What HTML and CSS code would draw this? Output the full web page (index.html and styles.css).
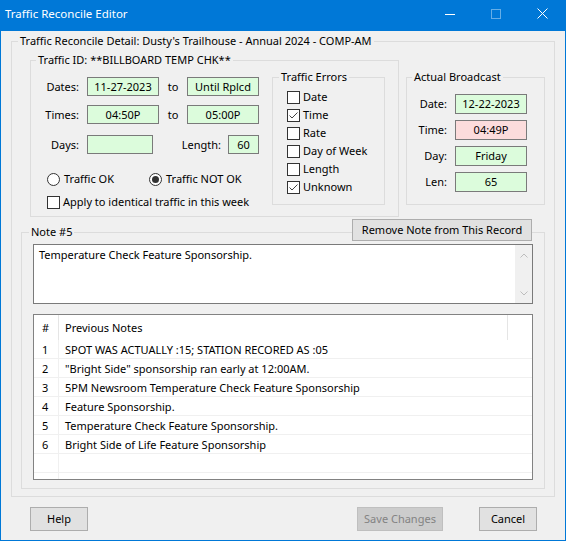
FILE: index.html
```html
<!DOCTYPE html>
<html>
<head>
<meta charset="utf-8">
<title>Traffic Reconcile Editor</title>
<link rel="stylesheet" href="styles.css">
</head>
<body>
<div class="window">
  <div class="titlebar">
    <div class="title">Traffic Reconcile Editor</div>
    <div class="cap"><svg width="10" height="10" viewBox="0 0 10 10"><line x1="0" y1="5.5" x2="10" y2="5.5" stroke="#fff" stroke-width="1"/></svg></div>
    <div class="cap"><svg width="10" height="10" viewBox="0 0 10 10"><rect x="0.5" y="0.5" width="9" height="9" fill="none" stroke="#66aee7" stroke-width="1"/></svg></div>
    <div class="cap"><svg width="11" height="11" viewBox="0 0 11 11"><line x1="0.5" y1="0.5" x2="10.5" y2="10.5" stroke="#fff" stroke-width="1"/><line x1="10.5" y1="0.5" x2="0.5" y2="10.5" stroke="#fff" stroke-width="1"/></svg></div>
  </div>

  <div class="gb outer">
    <div class="gb-title outer-title">Traffic Reconcile Detail: Dusty's Trailhouse - Annual 2024 - COMP-AM</div>
    <div class="top-row">
      <div class="gb tid">
        <div class="gb-title tid-title">Traffic ID: **BILLBOARD TEMP CHK**</div>
        <div class="tid-body">
          <div class="tid-left">
            <div class="frow">
              <div class="lbl">Dates:</div>
              <div class="fld w72 ml8">11-27-2023</div>
              <div class="to">to</div>
              <div class="fld w72">Until Rplcd</div>
            </div>
            <div class="frow r2">
              <div class="lbl">Times:</div>
              <div class="fld w72 ml8">04:50P</div>
              <div class="to">to</div>
              <div class="fld w72">05:00P</div>
            </div>
            <div class="frow r3">
              <div class="lbl">Days:</div>
              <div class="fld w66 ml8"></div>
              <div class="lbl len-lbl">Length:</div>
              <div class="fld w31 ml7">60</div>
            </div>
            <div class="radio-row">
              <div class="ropt first"><span class="radio"></span><span>Traffic OK</span></div>
              <div class="ropt"><span class="radio on"></span><span>Traffic NOT OK</span></div>
            </div>
            <div class="check-row">
              <span class="cb"></span><span>Apply to identical traffic in this week</span>
            </div>
          </div>
          <div class="gb errors">
            <div class="gb-title err-title">Traffic Errors</div>
            <div class="elist">
              <div class="erow"><span class="cb"></span><span>Date</span></div>
              <div class="erow"><span class="cb"><svg width="11" height="11" viewBox="0 0 11 11"><polyline points="1.5,5.5 4,8 9.5,2.5" fill="none" stroke="#444" stroke-width="1"/></svg></span><span>Time</span></div>
              <div class="erow"><span class="cb"></span><span>Rate</span></div>
              <div class="erow"><span class="cb"></span><span>Day of Week</span></div>
              <div class="erow"><span class="cb"></span><span>Length</span></div>
              <div class="erow"><span class="cb"><svg width="11" height="11" viewBox="0 0 11 11"><polyline points="1.5,5.5 4,8 9.5,2.5" fill="none" stroke="#444" stroke-width="1"/></svg></span><span>Unknown</span></div>
            </div>
          </div>
        </div>
      </div>
      <div class="gb ab">
        <div class="gb-title ab-title">Actual Broadcast</div>
        <div class="ab-rows">
          <div class="abrow"><div class="ablbl">Date:</div><div class="fld w72 ab-fld">12-22-2023</div></div>
          <div class="abrow"><div class="ablbl">Time:</div><div class="fld w72 ab-fld bad">04:49P</div></div>
          <div class="abrow"><div class="ablbl">Day:</div><div class="fld w72 ab-fld">Friday</div></div>
          <div class="abrow"><div class="ablbl">Len:</div><div class="fld w72 ab-fld">65</div></div>
        </div>
      </div>
    </div>

    <div class="gb note">
      <div class="note-head">
        <div class="gb-title note-title">Note #5</div>
        <button class="btn remove">Remove Note from This Record</button>
      </div>
      <div class="memo">
        <div class="memo-text">Temperature Check Feature Sponsorship.</div>
        <div class="memo-sb">
          <svg width="8" height="5" viewBox="0 0 8 5"><polyline points="0.5,4.5 4,1 7.5,4.5" fill="none" stroke="#bdbdbd" stroke-width="1"/></svg>
          <svg width="8" height="5" viewBox="0 0 8 5"><polyline points="0.5,0.5 4,4 7.5,0.5" fill="none" stroke="#bdbdbd" stroke-width="1"/></svg>
        </div>
      </div>
      <div class="list">
        <div class="lh"><div class="c1">#</div><div class="c2">Previous Notes</div><div class="c3"></div></div>
        <div class="lr"><div class="c1">1</div><div class="c2">SPOT WAS ACTUALLY :15; STATION RECORED AS :05</div></div>
        <div class="lr"><div class="c1">2</div><div class="c2">"Bright Side" sponsorship ran early at 12:00AM.</div></div>
        <div class="lr"><div class="c1">3</div><div class="c2">5PM Newsroom Temperature Check Feature Sponsorship</div></div>
        <div class="lr"><div class="c1">4</div><div class="c2">Feature Sponsorship.</div></div>
        <div class="lr"><div class="c1">5</div><div class="c2">Temperature Check Feature Sponsorship.</div></div>
        <div class="lr"><div class="c1">6</div><div class="c2">Bright Side of Life Feature Sponsorship</div></div>
        <div class="lr"><div class="c1"></div><div class="c2"></div></div>
        <div class="lr"><div class="c1"></div><div class="c2"></div></div>
      </div>
    </div>
  </div>

  <div class="btnrow">
    <button class="btn help">Help</button>
    <button class="btn save" disabled>Save Changes</button>
    <button class="btn cancel">Cancel</button>
  </div>
</div>
</body>
</html>
```

FILE: styles.css
```css
* { box-sizing: border-box; }
html, body { margin: 0; padding: 0; }
body {
  width: 566px;
  height: 541px;
  overflow: hidden;
  background: #f0f0f0;
  font-family: "Noto Sans", "Segoe UI", sans-serif;
  font-size: 11px;
  line-height: 16px;
  color: #000;
}
.window {
  width: 566px;
  height: 541px;
  border: 1px solid #0078d7;
  border-top: 0;
  display: flex;
  flex-direction: column;
  background: #f0f0f0;
}
.titlebar {
  height: 31px;
  flex: none;
  background: #0078d7;
  color: #fff;
  display: flex;
  align-items: flex-start;
}
.title {
  flex: 1;
  padding: 6px 0 0 4px;
  font-size: 11.5px;
  line-height: 16px;
}
.cap {
  width: 46px;
  height: 27px;
  display: flex;
  align-items: center;
  justify-content: center;
}
.cap svg { display: block; }

/* group boxes */
.gb { border: 1px solid #dcdcdc; display: flex; flex-direction: column; }
.gb-title {
  align-self: flex-start;
  height: 16px;
  line-height: 16px;
  margin-top: -9px;
  padding: 0 2px;
  background: #f0f0f0;
  white-space: nowrap;
}
.outer { margin: 10px 10px 0 10px; padding-bottom: 7px; flex: none; }
.outer-title { margin-left: 6px; }

.top-row { display: flex; align-items: flex-start; }
.tid { margin: 11px 0 0 18px; width: 369px; height: 157px; }
.tid-title { margin-left: 5px; }
.tid-body { display: flex; align-items: flex-start; }
.tid-left { width: 228px; margin-top: 9px; }

.frow { display: flex; align-items: center; height: 19px; }
.frow.r2 { margin-top: 9px; }
.frow.r3 { margin-top: 11px; }
.lbl { width: 48px; text-align: right; white-space: nowrap; }
.len-lbl { width: 68px; }
.to { width: 28px; text-align: center; }
.fld {
  height: 19px;
  border: 1px solid #7a7a7a;
  background: #dcfcdc;
  display: flex;
  align-items: center;
  justify-content: center;
  white-space: nowrap;
}
.fld.bad { background: #fcdcdc; }
.w72 { width: 72px; }
.w66 { width: 66px; }
.w31 { width: 31px; }
.ml8 { margin-left: 8px; }
.ml7 { margin-left: 7px; }

.radio-row {
  display: flex;
  align-items: center;
  height: 16px;
  margin-top: 17px;
  padding-left: 16px;
}
.ropt { display: flex; align-items: center; gap: 4px; white-space: nowrap; }
.ropt.first { width: 102px; }
.radio {
  width: 13px;
  height: 13px;
  border: 1px solid #333;
  border-radius: 50%;
  background: #fff;
  display: flex;
  align-items: center;
  justify-content: center;
}
.radio.on::after {
  content: "";
  width: 7px;
  height: 7px;
  border-radius: 50%;
  background: #333;
}
.check-row {
  display: flex;
  align-items: center;
  gap: 3px;
  height: 16px;
  margin-top: 7px;
  padding-left: 16px;
  white-space: nowrap;
}
.cb {
  width: 13px;
  height: 13px;
  flex: none;
  border: 1px solid #333;
  background: #fff;
  display: flex;
  align-items: center;
  justify-content: center;
}
.cb svg { display: block; }

.errors { margin: 9px 0 0 13px; width: 113px; height: 128px; }
.err-title { margin-left: 6px; }
.elist { margin-top: 3px; padding-left: 14px; }
.erow { display: flex; align-items: center; gap: 3px; height: 18px; white-space: nowrap; }

.ab { margin: 28px 0 0 7px; width: 139px; height: 128px; }
.ab-title { margin-left: 5px; }
.ab-rows { margin-top: 9px; display: flex; flex-direction: column; gap: 6px; }
.abrow { display: flex; align-items: center; height: 20px; }
.ablbl { width: 40px; text-align: right; }
.ab-fld { height: 20px; margin-left: 8px; }

/* note */
.note { margin: 15px 9px 0 9px; padding-bottom: 8px; }
.note-head {
  display: flex;
  justify-content: space-between;
  align-items: flex-start;
  height: 22px;
  margin-top: -14px;
}
.note-title { margin-top: 5px; margin-left: 7px; }
.btn {
  font-family: inherit;
  font-size: 11px;
  line-height: 16px;
  color: #000;
  background: #e1e1e1;
  border: 1px solid #adadad;
  padding: 0;
  margin: 0;
  border-radius: 0;
}
.remove { width: 180px; height: 22px; margin-right: 12px; }

.memo {
  margin: 3px 11px 0 11px;
  height: 60px;
  border: 1px solid #7a7a7a;
  background: #fff;
  display: flex;
}
.memo-text { flex: 1; padding: 2px 5px; line-height: 16px; }
.memo-sb {
  width: 17px;
  background: #f0f0f0;
  display: flex;
  flex-direction: column;
  justify-content: space-between;
  align-items: center;
  padding: 8px 0 7px;
}
.memo-sb svg { display: block; }

.list {
  margin: 10px 11px 0 11px;
  height: 166px;
  border: 1px solid #828282;
  background: #fff;
  overflow: hidden;
}
.lh { display: flex; height: 25px; }
.lh .c1, .lh .c2 { border-right: 1px solid #e5e5e5; }
.c1 { width: 25px; padding-left: 8px; display: flex; align-items: center; flex: none; }
.c2 { padding-left: 6px; display: flex; align-items: center; white-space: nowrap; }
.lh .c2 { width: 449px; flex: none; }
.lh .c3 { flex: 1; }
.lr { display: flex; height: 19px; border-bottom: 1px solid #f0f0f0; padding-top: 1px; }
.lr .c1 { border-right: 1px solid #f0f0f0; margin-top: -1px; padding-top: 1px; }
.lr .c2 { flex: 1; }

/* bottom buttons */
.btnrow {
  display: flex;
  margin-top: 10px;
  padding: 0 28px 0 29px;
}
.help { width: 58px; height: 24px; }
.save { width: 86px; height: 24px; margin-left: auto; background: #cccccc; border-color: #bfbfbf; color: #838383; }
.cancel { width: 58px; height: 24px; margin-left: 36px; }
```
